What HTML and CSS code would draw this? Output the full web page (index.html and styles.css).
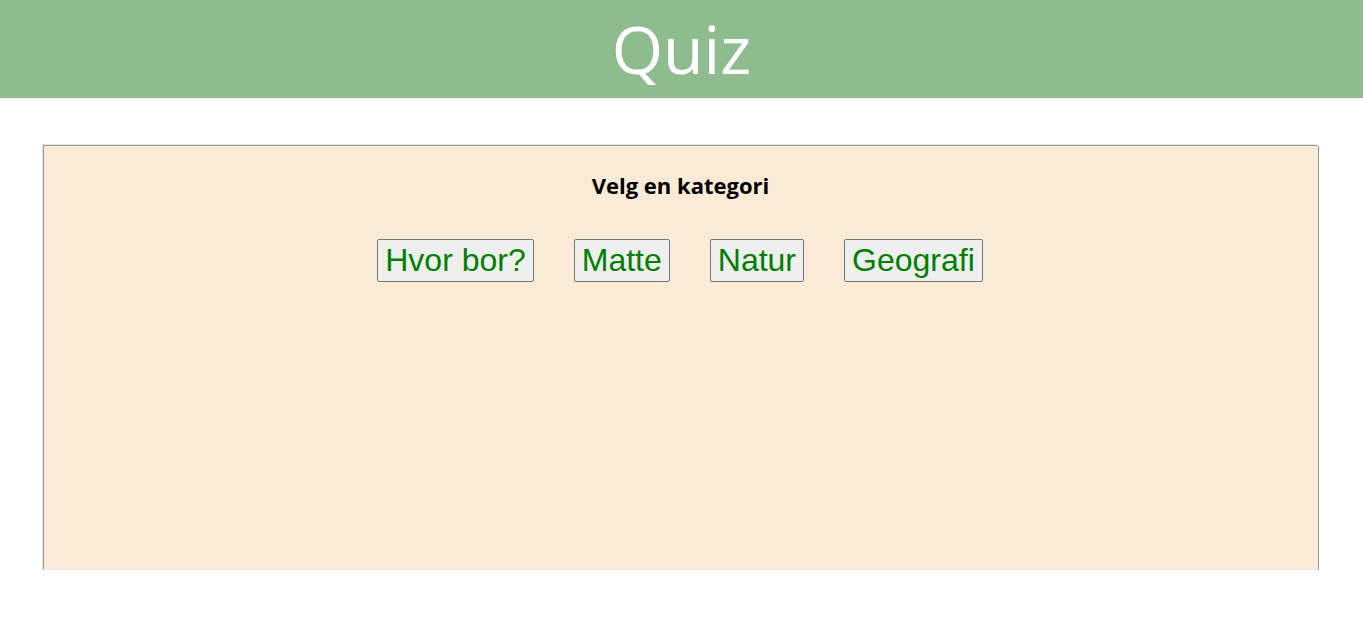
FILE: index.html
```html
<!DOCTYPE html>
<html lang="no">
<head>
<meta charset="utf-8">
<title>Quiz</title>
<link rel="stylesheet" href="styles.css">
</head>
<body>
<header class="topbar">
  <h1 class="title">Quiz</h1>
</header>
<main class="panel">
  <h2 class="prompt">Velg en kategori</h2>
  <div class="categories">
    <button class="cat">Hvor bor?</button>
    <button class="cat">Matte</button>
    <button class="cat">Natur</button>
    <button class="cat">Geografi</button>
  </div>
</main>
</body>
</html>
```
FILE: styles.css
```css
html, body {
  margin: 0;
  padding: 0;
  background: #ffffff;
}
body {
  font-family: "Open Sans", "Noto Sans", sans-serif;
}
.topbar {
  background: #8fbc8f;
  height: 98px;
}
.title {
  margin: 0;
  text-align: center;
  color: #ffffff;
  font-weight: 400;
  font-size: 66px;
  line-height: 97px;
}
.panel {
  box-sizing: border-box;
  margin: 47px 45px 0 43px;
  height: 425px;
  background: #faebd7;
  border: 1px solid;
  border-color: #9a9a9a #e8e8e8 #e8e8e8 #9a9a9a;
  box-shadow: -1px -1px 0 #e6e6e6, 1px 1px 0 #9a9a9a;
  padding-top: 25px;
}
.prompt {
  margin: 0;
  text-align: center;
  font-size: 22px;
  font-weight: 700;
  line-height: 28px;
  color: #000000;
}
.categories {
  margin-top: 40px;
  display: flex;
  justify-content: center;
  gap: 40px;
  padding-right: 1px;
}
.cat {
  font-family: "Liberation Sans", Arial, sans-serif;
  font-size: 32px;
  line-height: 37px;
  color: #008000;
  background: #efefef;
  border: 1px solid #767676;
  border-radius: 2px;
  padding: 2px 7px;
  margin: 0;
}
```
